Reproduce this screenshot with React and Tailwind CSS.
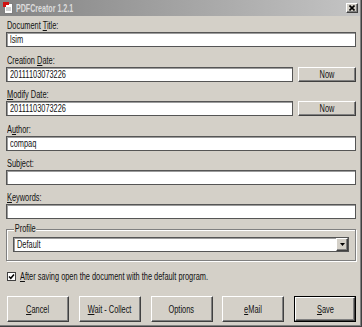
import React from 'react';

const sunken = 'bg-white border border-[#555] shadow-[inset_1px_1px_0_#9c9c9c]';
const raised =
  'border border-t-white border-l-white border-r-[#404040] border-b-[#404040] shadow-[inset_-1px_-1px_0_#808080] bg-[#d4d0c8]';

// the dialog was shot squeezed sideways, so text is narrowed to match
function T({ children, center }) {
  return (
    <span className={`inline-block whitespace-nowrap scale-x-[0.74] ${center ? 'origin-center' : 'origin-left'}`}>
      {children}
    </span>
  );
}

function Field({ label, value, mt, now }) {
  return (
    <div className={mt}>
      <div className="h-[12px] leading-[12px] pl-[1px]"><T>{label}</T></div>
      <div className="flex gap-[5px]">
        <div className={`${sunken} flex-1 h-[15px] leading-[13px] pl-[3px]`}><T>{value}</T></div>
        {now && (
          <div className={`${raised} w-[58px] h-[15px] leading-[13px] text-center`}><T center>Now</T></div>
        )}
      </div>
    </div>
  );
}

function Btn({ children, primary }) {
  if (primary) {
    return (
      <div className="w-[62px] h-[26px] border border-black">
        <div className={`${raised} h-full flex items-center justify-center`}><T center>{children}</T></div>
      </div>
    );
  }
  return (
    <div className={`${raised} w-[62px] h-[26px] flex items-center justify-center`}><T center>{children}</T></div>
  );
}

export default function App() {
  return (
    <div className="w-[362px] h-[327px] overflow-hidden bg-[#d4d0c8] flex flex-col text-[10px] text-[#111] font-['Liberation_Sans',Arial,sans-serif] shadow-[inset_-1px_-1px_0_#404040,inset_-2px_-2px_0_#808080]">
      {/* title bar */}
      <div className="h-[16px] flex items-center bg-linear-to-r from-[#848484] to-[#c4c4c4] mr-[2px]">
        <svg width="11" height="12" viewBox="0 0 11 12" className="ml-[3px]">
          <rect x="1.5" y="1.5" width="8" height="10" fill="#fff" stroke="#808080" />
          <path d="M0 0h6v3H3v2H0z" fill="#d01010" />
          <path d="M3 6h5M3 8h5" stroke="#a0a0a0" />
        </svg>
        <span className="ml-[2px] font-bold text-[10px] text-[#dcdcdc] inline-block whitespace-nowrap scale-x-[0.71] origin-left">
          PDFCreator 1.2.1
        </span>
        <div className={`${raised} ml-auto mr-[2px] w-[12px] h-[10px] flex items-center justify-center`}>
          <svg width="6" height="6" viewBox="0 0 6 6">
            <path d="M0.5 0.5l5 5M5.5 0.5l-5 5" stroke="#000" strokeWidth="1.6" />
          </svg>
        </div>
      </div>

      <div className="pl-[6px] pr-[6px] flex flex-col">
        <Field mt="mt-[4px]" label={<>Document <u>T</u>itle:</>} value="lsim" />
        <Field mt="mt-[8px]" label={<>Creation <u>D</u>ate:</>} value="20111103073226" now />
        <Field mt="mt-[7px]" label={<><u>M</u>odify Date:</>} value="20111103073226" now />
        <Field mt="mt-[8px]" label={<>A<u>u</u>thor:</>} value="compaq" />
        <Field mt="mt-[7px]" label={<>Sub<u>j</u>ect:</>} value="" />
        <Field mt="mt-[7px]" label={<><u>K</u>eywords:</>} value="" />

        {/* profile group */}
        <div className="mt-[10px] h-[32px] border border-[#808080] shadow-[inset_1px_1px_0_#fff,1px_1px_0_#fff] relative px-[6px] pt-[7px]">
          <span className="absolute left-[7px] top-[-7px] bg-[#d4d0c8] px-[1px] leading-[12px] inline-block whitespace-nowrap scale-x-[0.74] origin-left">
            Profile
          </span>
          <div className={`${sunken} h-[15px] flex items-center`}>
            <span className="pl-[3px] flex-1 leading-[13px]"><T>Default</T></span>
            <div className={`${raised} w-[12px] h-[13px] flex items-center justify-center`}>
              <svg width="5" height="3" viewBox="0 0 5 3">
                <path d="M0 0h5L2.5 3z" fill="#000" />
              </svg>
            </div>
          </div>
        </div>

        {/* checkbox */}
        <div className="mt-[10px] flex items-center h-[10px] pl-[1px]">
          <div className="w-[9px] h-[9px] bg-white border border-[#404040] flex items-center justify-center">
            <svg width="7" height="7" viewBox="0 0 7 7">
              <path d="M1 3.5l1.8 1.8L6 1.6" stroke="#000" strokeWidth="1.5" fill="none" />
            </svg>
          </div>
          <span className="ml-[4px]"><T><u>A</u>fter saving open the document with the default program.</T></span>
        </div>

        {/* buttons */}
        <div className="mt-[15px] flex justify-between pl-[1px]">
          <Btn><u>C</u>ancel</Btn>
          <Btn><u>W</u>ait - Collect</Btn>
          <Btn>Options</Btn>
          <Btn><u>e</u>Mail</Btn>
          <Btn primary><u>S</u>ave</Btn>
        </div>
      </div>
    </div>
  );
}
